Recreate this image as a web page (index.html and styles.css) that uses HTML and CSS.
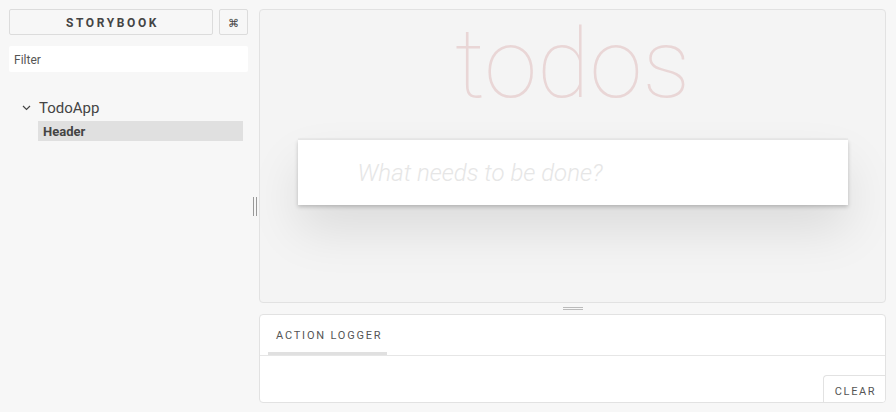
FILE: index.html
```html
<!DOCTYPE html>
<html>
<head>
<meta charset="utf-8">
<link rel="stylesheet" href="styles.css">
</head>
<body>
<div class="app">
  <aside class="sidebar">
    <div class="brand-row">
      <button class="brand">STORYBOOK</button>
      <button class="shortcut">⌘</button>
    </div>
    <input class="filter" placeholder="Filter">
    <div class="tree">
      <div class="kind">
        <svg class="chev" width="9" height="6" viewBox="0 0 9 6"><path d="M1 1 L4.5 4.5 L8 1" fill="none" stroke="#444" stroke-width="1.2"/></svg>
        <span>TodoApp</span>
      </div>
      <div class="story">Header</div>
    </div>
  </aside>
  <div class="vhandle"><span></span><span></span></div>
  <main class="main">
    <section class="preview">
      <div class="todoapp">
        <h1 class="title">todos</h1>
        <input class="new-todo" placeholder="What needs to be done?">
      </div>
    </section>
    <div class="hhandle"><span></span><span></span></div>
    <section class="logger">
      <div class="tabs"><div class="tab">ACTION LOGGER</div></div>
      <div class="log-body"><button class="clear">CLEAR</button></div>
    </section>
  </main>
</div>
</body>
</html>
```
FILE: styles.css
```css
* { box-sizing: border-box; }
html, body { margin: 0; height: 100%; }
body {
  background: #f7f7f7;
  font-family: Roboto, "Liberation Sans", sans-serif;
  color: #444;
  overflow: hidden;
}
.app {
  display: grid;
  grid-template-columns: 250px 9px 627px;
  height: 412px;
}
.sidebar {
  padding: 9px 0 0 9px;
}
.brand-row {
  display: flex;
  gap: 6px;
  width: 239px;
}
.brand {
  flex: 1;
  height: 26px;
  background: transparent;
  border: 1px solid #dcdcdc;
  border-radius: 2px;
  font-family: Roboto, "Liberation Sans", sans-serif;
  font-weight: 700;
  font-size: 12px;
  letter-spacing: 2.6px;
  color: #444;
  padding: 2px 0 0 3px;
}
.shortcut {
  width: 29px;
  height: 26px;
  background: transparent;
  border: 1px solid #dcdcdc;
  border-radius: 2px;
  font-size: 11px;
  color: #444;
  padding: 2px 0 0;
}
.filter {
  display: block;
  margin-top: 11px;
  width: 239px;
  height: 26px;
  border: none;
  background: #fff;
  border-radius: 2px;
  padding: 2px 5px 0;
  font-family: Roboto, "Liberation Sans", sans-serif;
  font-size: 12px;
  outline: none;
}
.filter::placeholder { color: #555; }
.tree { padding: 27px 0 0 13px; }
.kind {
  display: flex;
  align-items: center;
  height: 18px;
  font-size: 15px;
  color: #444;
}
.chev { margin-right: 8px; }
.story {
  margin: 4px 0 0 16px;
  width: 205px;
  height: 20px;
  line-height: 21px;
  background: #e0e0e0;
  padding-left: 5px;
  font-size: 13px;
  font-weight: 700;
  color: #444;
}
.vhandle {
  display: flex;
  justify-content: center;
  align-items: center;
  gap: 2px;
}
.vhandle span {
  width: 1px;
  height: 19px;
  background: #999;
}
.main {
  display: flex;
  flex-direction: column;
  padding: 9px 0;
}
.preview {
  height: 294px;
  flex: none;
  background: #f4f4f4;
  border: 1px solid #e2e2e2;
  border-radius: 4px;
  overflow: hidden;
}
.todoapp {
  width: 550px;
  margin: 0 auto;
}
.title {
  margin: -1px 0 0;
  height: 110px;
  line-height: 110px;
  text-align: center;
  font-family: Roboto, Lato, sans-serif;
  font-weight: 100;
  font-size: 96px;
  color: rgba(175, 47, 47, 0.15);
}
.new-todo {
  display: block;
  margin-top: 21px;
  width: 550px;
  height: 65px;
  border: none;
  background: #fff;
  padding: 17px 16px 16px 60px;
  font-family: Roboto, "Liberation Sans", sans-serif;
  font-size: 24px;
  font-weight: 300;
  box-shadow: 0 -2px 1px rgba(0,0,0,0.03), 0 2px 4px rgba(0,0,0,0.2), 0 25px 50px rgba(0,0,0,0.1);
  outline: none;
}
.new-todo::placeholder {
  font-style: italic;
  font-weight: 300;
  color: #e6e6e6;
}
.hhandle {
  height: 11px;
  flex: none;
  display: flex;
  flex-direction: column;
  align-items: center;
  justify-content: center;
  gap: 1px;
}
.hhandle span {
  width: 20px;
  height: 1px;
  background: #bbb;
}
.logger {
  flex: 1;
  background: #fff;
  border: 1px solid #e2e2e2;
  border-radius: 4px;
  display: flex;
  flex-direction: column;
  overflow: hidden;
}
.tabs {
  height: 41px;
  border-bottom: 1px solid #e6e6e6;
  padding-left: 8px;
  display: flex;
  align-items: flex-end;
}
.tab {
  width: 119px;
  height: 40px;
  padding: 14px 0 0 8px;
  font-size: 11px;
  letter-spacing: 1.8px;
  color: #555;
  border-bottom: 3px solid #e0e0e0;
}
.log-body {
  flex: 1;
  display: flex;
  justify-content: flex-end;
  align-items: flex-end;
}
.clear {
  width: 62px;
  height: 27px;
  background: #fff;
  border: 1px solid #e2e2e2;
  border-right: none;
  border-bottom: none;
  border-radius: 4px 0 0 0;
  font-family: Roboto, "Liberation Sans", sans-serif;
  font-size: 11px;
  letter-spacing: 1.6px;
  color: #555;
  padding: 4px 0 0 2px;
}
```
